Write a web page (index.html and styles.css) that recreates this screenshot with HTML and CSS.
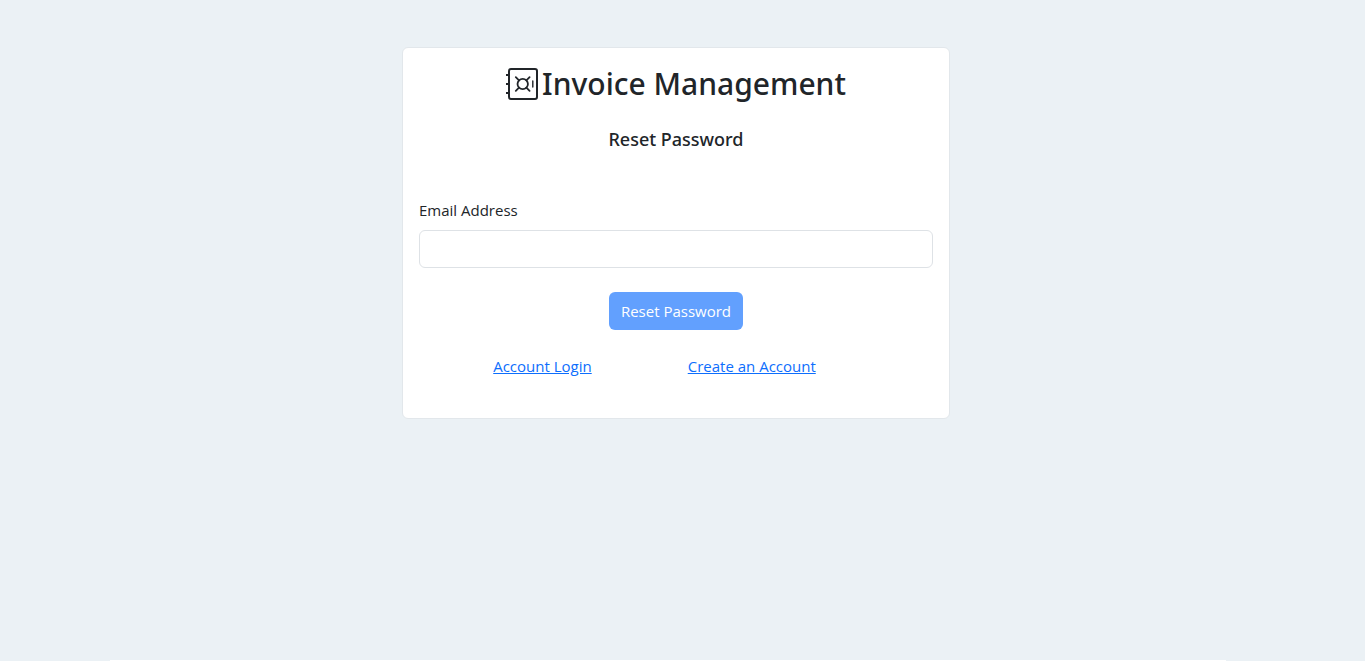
FILE: index.html
```html
<!DOCTYPE html>
<html lang="en">
<head>
<meta charset="utf-8">
<meta name="viewport" content="width=device-width, initial-scale=1">
<title>Invoice Management</title>
<link rel="stylesheet" href="styles.css">
</head>
<body>
<main class="page">
  <section class="card">
    <h1 class="brand">
      <svg class="brand-icon" viewBox="0 0 16 16" fill="none" stroke="currentColor" aria-hidden="true">
        <rect x="1.5" y=".5" width="14" height="15" rx="1"/>
        <path d="M0 3.5h1.5M0 8h1.5M0 12.5h1.5"/>
        <circle cx="8.36" cy="8" r="2.6" stroke-width=".9"/>
        <path stroke-linecap="round" stroke-width=".9" d="M4.9 4.6l1.6 1.6M11.8 4.6l-1.6 1.6M4.9 11.4l1.6-1.6M11.8 11.4l-1.6-1.6"/>
        <path stroke-linecap="round" stroke-width=".7" d="M13.4 6.5v3"/>
      </svg>
      <span>Invoice Management</span>
    </h1>
    <h2 class="subtitle">Reset Password</h2>
    <form class="form">
      <label class="label" for="email">Email Address</label>
      <input class="input" id="email" type="email">
      <button class="button" type="submit" disabled>Reset Password</button>
    </form>
    <nav class="links">
      <a href="#login">Account Login</a>
      <a href="#create">Create an Account</a>
    </nav>
  </section>
</main>
<footer class="footer"></footer>
</body>
</html>
```
FILE: styles.css
```css
* {
  box-sizing: border-box;
}

body {
  display: flex;
  flex-direction: column;
  min-height: 100vh;
  margin: 0;
  background: #ebf1f5;
  color: #212529;
  font-family: "Segoe UI", "Open Sans", "Noto Sans", sans-serif;
  font-size: 15px;
  line-height: 24px;
}

.page {
  flex: 1;
  padding: 47px 13px 24px 0;
}

.card {
  width: 100%;
  max-width: 548px;
  margin: 0 auto;
  padding: 16px 16px 40px;
  border: 1px solid #e2e7eb;
  border-radius: 6px;
  background: #fff;
}

.brand,
.subtitle {
  font-family: "Segoe UI", "Noto Sans", "Open Sans", sans-serif;
  font-weight: 500;
}

.brand {
  display: flex;
  align-items: center;
  justify-content: center;
  gap: 4px;
  margin: 0;
  font-size: 30px;
  line-height: 40px;
}

.brand-icon {
  flex: none;
  width: 32px;
  height: 32px;
}

.subtitle {
  margin: 23px 0 47px;
  font-size: 18px;
  line-height: 24px;
  text-align: center;
}

.form {
  display: flex;
  flex-direction: column;
}

.label {
  margin-bottom: 8px;
}

.input {
  width: 100%;
  height: 38px;
  padding: 6px 12px;
  border: 1px solid #dee2e6;
  border-radius: 6px;
  background: #fff;
  color: inherit;
  font: inherit;
}

.button {
  align-self: center;
  margin-top: 24px;
  padding: 7px 12px;
  border: 0;
  border-radius: 6px;
  background: #62a0fe;
  color: #fff;
  font: inherit;
}

.links {
  display: flex;
  justify-content: center;
  gap: 96px;
  margin-top: 24px;
  padding-right: 43px;
}

.links a {
  color: #0d6efd;
}

.footer {
  height: 1px;
  margin: 0 139px 0 110px;
  background: #fff;
}
```
